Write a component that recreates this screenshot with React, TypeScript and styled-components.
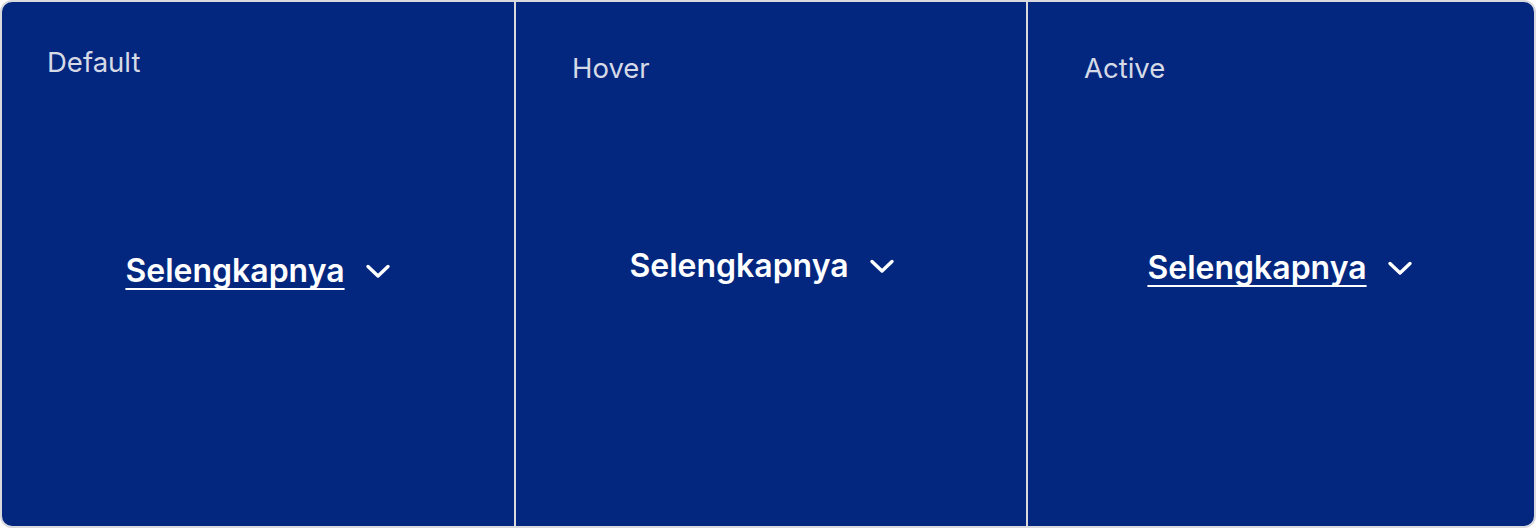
import styled, { createGlobalStyle } from "styled-components";

const GlobalStyle = createGlobalStyle`
  html, body {
    margin: 0;
    padding: 0;
    background: #ffffff;
  }
  body {
    font-family: Inter, "Noto Sans", sans-serif;
  }
`;

type State = {
  label: string;
  underline: boolean;
  labelPad: [number, number];
  nudge: [number, number];
};

const states: State[] = [
  { label: "Default", underline: true, labelPad: [43, 45], nudge: [0, 14] },
  { label: "Hover", underline: false, labelPad: [49, 56], nudge: [-18, -2] },
  { label: "Active", underline: true, labelPad: [49, 56], nudge: [-2, 2] },
];

const ChevronDown = () => (
  <svg width="26" height="16" viewBox="0 0 26 16" fill="none">
    <path
      d="M3 3.5l10 9.5 10-9.5"
      stroke="#ffffff"
      strokeWidth="3.4"
      strokeLinecap="round"
      strokeLinejoin="round"
    />
  </svg>
);

const App = () => {
  return (
    <>
      <GlobalStyle />
      <Frame>
        {states.map((s) => (
          <Panel key={s.label}>
            <Label $top={s.labelPad[0]} $left={s.labelPad[1]}>
              {s.label}
            </Label>
            <Stage>
              <MoreLink
                href="#"
                $underline={s.underline}
                $dx={s.nudge[0]}
                $dy={s.nudge[1]}
              >
                <span>Selengkapnya</span>
                <ChevronDown />
              </MoreLink>
            </Stage>
          </Panel>
        ))}
      </Frame>
    </>
  );
};

export default App;

const Frame = styled.main`
  box-sizing: border-box;
  width: 1536px;
  height: 528px;
  display: grid;
  grid-template-columns: 512px 510px 1fr;
  gap: 2px;
  background: #d9d9de;
  border: 2px solid #d9d9de;
  border-radius: 12px;
  overflow: hidden;
`;

const Panel = styled.section`
  display: flex;
  flex-direction: column;
  background: #03277f;
  min-height: 0;
`;

const Label = styled.div<{ $top: number; $left: number }>`
  padding: ${(p) => p.$top}px 0 0 ${(p) => p.$left}px;
  color: #d6dae6;
  font-size: 27.5px;
  font-weight: 400;
  line-height: 34px;
`;

const Stage = styled.div`
  flex: 1;
  display: flex;
  align-items: center;
  justify-content: center;
  margin-top: -77px;
`;

const MoreLink = styled.a<{ $underline: boolean; $dx: number; $dy: number }>`
  display: inline-flex;
  align-items: center;
  gap: 20px;
  margin: ${(p) => p.$dy}px 0 0 ${(p) => p.$dx}px;
  color: #ffffff;
  font-size: 32px;
  font-weight: 600;
  line-height: 40px;
  text-decoration: none;

  span {
    text-decoration: ${(p) => (p.$underline ? "underline" : "none")};
    text-decoration-thickness: 2px;
    text-decoration-skip-ink: none;
    text-underline-offset: 6px;
  }
`;
